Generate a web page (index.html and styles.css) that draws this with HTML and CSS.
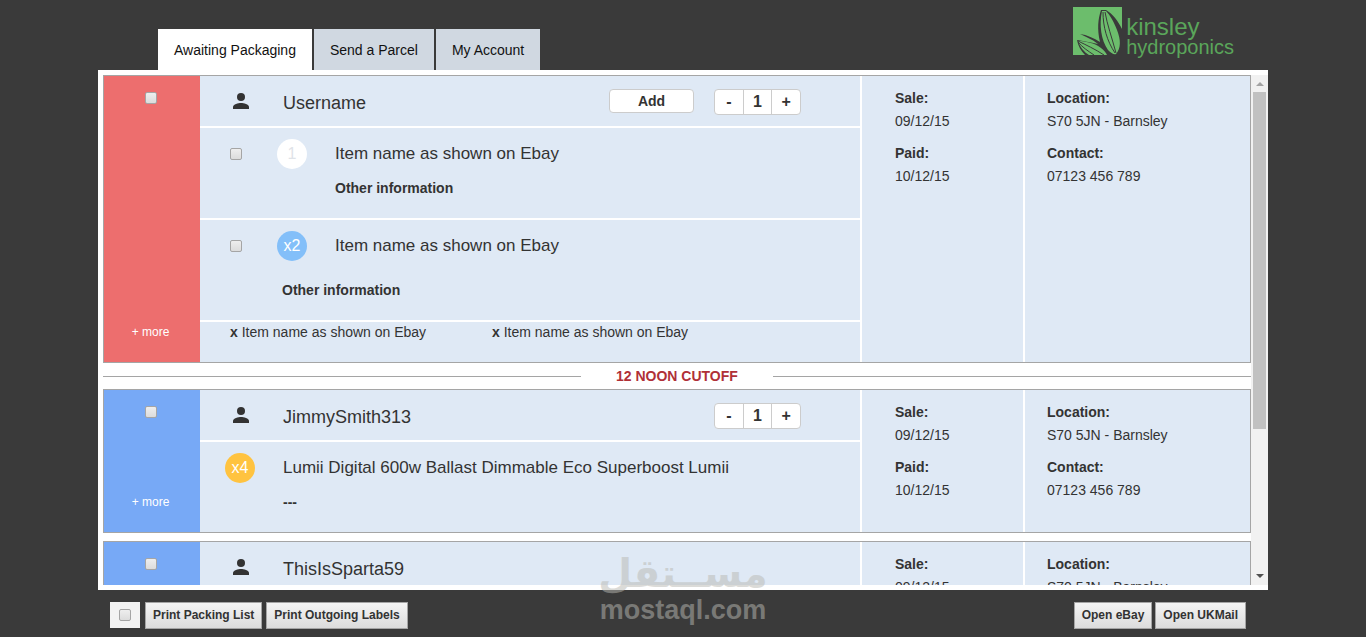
FILE: index.html
```html
<!DOCTYPE html>
<html lang="en">
<head>
    <meta charset="UTF-8">
    <meta name="viewport" content="width=device-width, initial-scale=1.0">
    <title>Kinsley Hydroponics - Awaiting Packaging</title>
    <link rel="stylesheet" href="styles.css">
</head>
<body>
    <svg class="sprite" aria-hidden="true">
        <symbol id="person" viewBox="0 0 24 24">
            <circle cx="12" cy="8" r="4"/>
            <path d="M4 20v-2c0-2.700 5.300-4 8-4s8 1.300 8 4v2z"/>
        </symbol>
    </svg>

    <header class="header container">
        <nav class="tabs">
            <a href="#" class="tab active">Awaiting Packaging</a>
            <a href="#" class="tab">Send a Parcel</a>
            <a href="#" class="tab">My Account</a>
        </nav>
        <a href="#" class="logo">
            <svg viewBox="0 0 50 48" width="50" height="48" aria-hidden="true">
                <path class="logo-bg" d="M0 0h49v22C45 14 40 7 33 3H28C25 12 24 22 27 35C21 31 14 28 7 27C11 29 19 32 25 37C17 35 10 34 4 33C5 39 8 44 12 48H0z"/>
                <path class="logo-bg" d="M29 4C26 18 28 33 35 43C38 46 41 48 43 47C48 41 48 33 44 23C41 15 37 8 33 4z"/>
                <path class="logo-bg" d="M5 34C12 34 22 36 28 41C31 43 33 46 34 48H16C11 45 7 40 5 34z"/>
                <path class="logo-vein" d="M30 5C30 20 34 34 42 46M32 5C34 17 39 31 43 46M5 34C13 38 22 42 31 48M5 35C9 40 15 44 21 48"/>
            </svg>
            <span class="logo-text">
                <span class="logo-top">kinsley</span>
                <span class="logo-bottom">hydroponics</span>
            </span>
        </a>
    </header>

    <main class="panel container">
        <div class="orders">
            <article class="order urgent">
                <div class="status">
                    <input type="checkbox" aria-label="Select Username">
                    <a href="#" class="more">+ more</a>
                </div>
                <div class="details">
                    <div class="customer">
                        <svg class="person"><use href="#person"/></svg>
                        <h2>Username</h2>
                        <button class="add">Add</button>
                        <div class="stepper">
                            <button>-</button>
                            <input type="text" value="1" aria-label="Parcels">
                            <button>+</button>
                        </div>
                    </div>
                    <div class="item">
                        <div class="item-head">
                            <input type="checkbox" aria-label="Select item 1">
                            <span class="qty">1</span>
                            <h3>Item name as shown on Ebay</h3>
                        </div>
                        <p class="other indent">Other information</p>
                    </div>
                    <div class="item tall">
                        <div class="item-head">
                            <input type="checkbox" aria-label="Select item 2">
                            <span class="qty blue">x2</span>
                            <h3>Item name as shown on Ebay</h3>
                        </div>
                        <p class="other">Other information</p>
                    </div>
                    <div class="extras">
                        <span><b>x</b> Item name as shown on Ebay</span>
                        <span><b>x</b> Item name as shown on Ebay</span>
                    </div>
                </div>
                <dl class="info">
                    <dt>Sale:</dt>
                    <dd>09/12/15</dd>
                    <dt>Paid:</dt>
                    <dd>10/12/15</dd>
                </dl>
                <dl class="info">
                    <dt>Location:</dt>
                    <dd>S70 5JN - Barnsley</dd>
                    <dt>Contact:</dt>
                    <dd>07123 456 789</dd>
                </dl>
            </article>

            <div class="cutoff">12 NOON CUTOFF</div>

            <article class="order">
                <div class="status">
                    <input type="checkbox" aria-label="Select JimmySmith313">
                    <a href="#" class="more">+ more</a>
                </div>
                <div class="details">
                    <div class="customer">
                        <svg class="person"><use href="#person"/></svg>
                        <h2>JimmySmith313</h2>
                        <div class="stepper">
                            <button>-</button>
                            <input type="text" value="1" aria-label="Parcels">
                            <button>+</button>
                        </div>
                    </div>
                    <div class="item single">
                        <div class="item-head">
                            <span class="qty yellow">x4</span>
                            <h3>Lumii Digital 600w Ballast Dimmable Eco Superboost Lumii</h3>
                        </div>
                        <p class="other">---</p>
                    </div>
                </div>
                <dl class="info">
                    <dt>Sale:</dt>
                    <dd>09/12/15</dd>
                    <dt>Paid:</dt>
                    <dd>10/12/15</dd>
                </dl>
                <dl class="info">
                    <dt>Location:</dt>
                    <dd>S70 5JN - Barnsley</dd>
                    <dt>Contact:</dt>
                    <dd>07123 456 789</dd>
                </dl>
            </article>

            <article class="order">
                <div class="status">
                    <input type="checkbox" aria-label="Select ThisIsSparta59">
                </div>
                <div class="details">
                    <div class="customer">
                        <svg class="person"><use href="#person"/></svg>
                        <h2>ThisIsSparta59</h2>
                    </div>
                </div>
                <dl class="info">
                    <dt>Sale:</dt>
                    <dd>09/12/15</dd>
                </dl>
                <dl class="info">
                    <dt>Location:</dt>
                    <dd>S70 5JN - Barnsley</dd>
                </dl>
            </article>
        </div>
        <div class="scrollbar" aria-hidden="true">
            <span class="arrow up"></span>
            <span class="thumb"></span>
            <span class="arrow down"></span>
        </div>
    </main>

    <footer class="footer container">
        <label class="select-all"><input type="checkbox" aria-label="Select all"></label>
        <button class="btn">Print Packing List</button>
        <button class="btn">Print Outgoing Labels</button>
        <div class="links">
            <button class="btn">Open eBay</button>
            <button class="btn">Open UKMail</button>
        </div>
    </footer>

    <div class="watermark">
        <span class="watermark-ar" lang="ar" dir="rtl">مســتقل</span>
        <span class="watermark-en">mostaql.com</span>
    </div>
</body>
</html>
```
FILE: styles.css
```css
* {
    box-sizing: border-box;
}
body {
    display: flex;
    flex-direction: column;
    height: 100vh;
    margin: 0;
    background-color: #3a3a3a;
    color: #333;
    font-family: "Liberation Sans", Arial, sans-serif;
    font-size: 14px;
    overflow: hidden;
}
h2, h3, p, dl, dd {
    margin: 0;
    font-weight: normal;
}
a {
    text-decoration: none;
}
button, input {
    font-family: inherit;
    color: #333;
}
.sprite {
    display: none;
}
.container {
    width: 100%;
    max-width: 1170px;
    margin: 0 auto;
}

/* header */
.header {
    display: flex;
    justify-content: space-between;
    height: 70px;
    padding: 0 34px 0 60px;
}
.tabs {
    display: flex;
    align-items: flex-end;
    gap: 2px;
}
.tab {
    padding: 1px 16px 0;
    line-height: 40px;
    background-color: #d0d8e1;
    color: #111;
}
.tab.active {
    background-color: #fff;
}
.logo {
    display: flex;
    gap: 3px;
    padding-top: 7px;
    color: #5aa65a;
}
.logo-bg {
    fill: #6cbd6c;
}
.logo-vein {
    fill: none;
    stroke: #3a3a3a;
    stroke-width: 1;
}
.logo-text {
    display: flex;
    flex-direction: column;
    padding-top: 10px;
    line-height: 20px;
}
.logo-top {
    font-size: 24px;
}
.logo-bottom {
    font-size: 20px;
}

/* order list */
.panel {
    display: flex;
    flex: 1;
    min-height: 0;
    padding: 5px 0 5px 5px;
    background-color: #fff;
}
.orders {
    flex: 1;
    overflow-y: auto;
    scrollbar-width: none;
}
.order {
    display: grid;
    grid-template-columns: 96px minmax(0, 1fr) 163px 227px;
    margin-bottom: 8px;
    border: 1px solid #a5a5a5;
    background-color: #dfe9f5;
}
.status {
    display: flex;
    flex-direction: column;
    align-items: center;
    justify-content: space-between;
    padding: 16px 3px 21px 0;
    background-color: #77a9f6;
}
.urgent .status {
    background-color: #ed6e6e;
}
.more {
    color: #fff;
    font-size: 12px;
    line-height: 18px;
}
input[type="checkbox"] {
    appearance: none;
    flex: none;
    width: 12px;
    height: 12px;
    margin: 0;
    border: 1px solid #a5a5a5;
    border-radius: 2px;
    background: linear-gradient(#eee, #dcdcdc);
}
.customer {
    display: flex;
    align-items: flex-start;
    height: 50px;
    padding: 13px 59px 0 29px;
}
.person {
    width: 24px;
    height: 24px;
    fill: #333;
}
.customer h2 {
    flex: 1;
    padding-left: 30px;
    font-size: 18px;
    line-height: 28px;
}
.add {
    width: 85px;
    height: 24px;
    margin-right: 20px;
    padding: 0;
    border: 1px solid #ccc;
    border-radius: 4px;
    background-color: #fff;
    font-size: 14px;
    font-weight: bold;
}
.stepper {
    display: flex;
    width: 87px;
    height: 26px;
    border: 1px solid #ccc;
    border-radius: 4px;
    background-color: #fff;
    overflow: hidden;
}
.stepper button,
.stepper input {
    flex: 1;
    min-width: 0;
    padding: 0;
    border: 0;
    background: none;
    font-size: 16px;
    font-weight: bold;
    line-height: 24px;
    text-align: center;
}
.stepper input {
    border: solid #ccc;
    border-width: 0 1px;
}
.item {
    min-height: 92px;
    padding: 11px 30px 0;
    border-top: 2px solid #fff;
}
.item-head {
    display: flex;
    align-items: center;
    height: 30px;
}
.item-head input {
    margin-right: 35px;
}
.item h3 {
    padding-left: 28px;
    font-size: 17px;
    line-height: 32px;
}
.qty {
    width: 30px;
    height: 30px;
    border-radius: 50%;
    background-color: #fff;
    color: #dfe3e8;
    font-size: 16px;
    line-height: 30px;
    text-align: center;
}
.qty.blue {
    background-color: #83bff9;
    color: #fff;
}
.qty.yellow {
    background-color: #ffc340;
    color: #fff;
}
.other {
    padding: 8px 0 0 52px;
    font-weight: bold;
    line-height: 22px;
}
.other.indent {
    padding-left: 105px;
}
.tall {
    min-height: 102px;
}
.tall .other {
    padding-top: 18px;
}
.single {
    padding-left: 25px;
}
.single .other {
    padding-left: 58px;
}
.extras {
    display: grid;
    grid-template-columns: 262px 262px;
    height: 42px;
    padding-left: 30px;
    border-top: 2px solid #fff;
    line-height: 20px;
}
.info {
    padding: 11px 0 0 33px;
    border-left: 2px solid #fff;
    line-height: 22px;
}
.info + .info {
    padding-left: 22px;
}
.info dt {
    font-weight: bold;
}
.info dd {
    margin-bottom: 9px;
    line-height: 24px;
}
.cutoff {
    display: flex;
    align-items: center;
    gap: 35px;
    height: 26px;
    margin-top: -8px;
    color: #b03037;
    font-weight: bold;
}
.cutoff::before,
.cutoff::after {
    content: "";
    width: 478px;
    border-top: 1px solid #a5a5a5;
}
.cutoff::after {
    flex: 1;
}

/* scrollbar */
.scrollbar {
    display: flex;
    flex-direction: column;
    align-items: center;
    width: 17px;
    background-color: #f1f1f1;
}
.thumb {
    width: 13px;
    height: 66%;
    margin: 6px 0 auto;
    background-color: #c1c1c1;
}
.arrow {
    margin: 7px 0 0;
    border: solid transparent;
    border-width: 0 4px;
}
.arrow.up {
    border-bottom: 4px solid #a3a3a3;
}
.arrow.down {
    margin: 0 0 7px;
    border-top: 4px solid #505050;
}

/* footer */
.footer {
    display: flex;
    align-items: flex-start;
    gap: 4px;
    height: 47px;
    padding: 12px 22px 0 12px;
}
.select-all {
    display: flex;
    align-items: center;
    justify-content: center;
    width: 30px;
    height: 26px;
    margin-right: 1px;
    background-color: #f3f3f3;
}
.btn {
    height: 27px;
    padding: 0 7px 2px;
    border: 1px solid #a5a5a5;
    background: linear-gradient(#f5f5f5, #dcdcdc);
    font-size: 12px;
    font-weight: bold;
}
.links {
    display: flex;
    gap: 3px;
    margin-left: auto;
}

/* watermark */
.watermark {
    position: absolute;
    bottom: 12px;
    left: 50%;
    display: flex;
    flex-direction: column;
    align-items: center;
    width: 168px;
    margin-left: -84px;
    color: #b9b9b3;
    opacity: 0.5;
    pointer-events: none;
}
.watermark-ar {
    font-family: "DejaVu Sans", sans-serif;
    font-size: 39px;
    font-weight: bold;
    line-height: 42px;
}
.watermark-en {
    font-size: 27px;
    font-weight: bold;
    line-height: 30px;
}
```
